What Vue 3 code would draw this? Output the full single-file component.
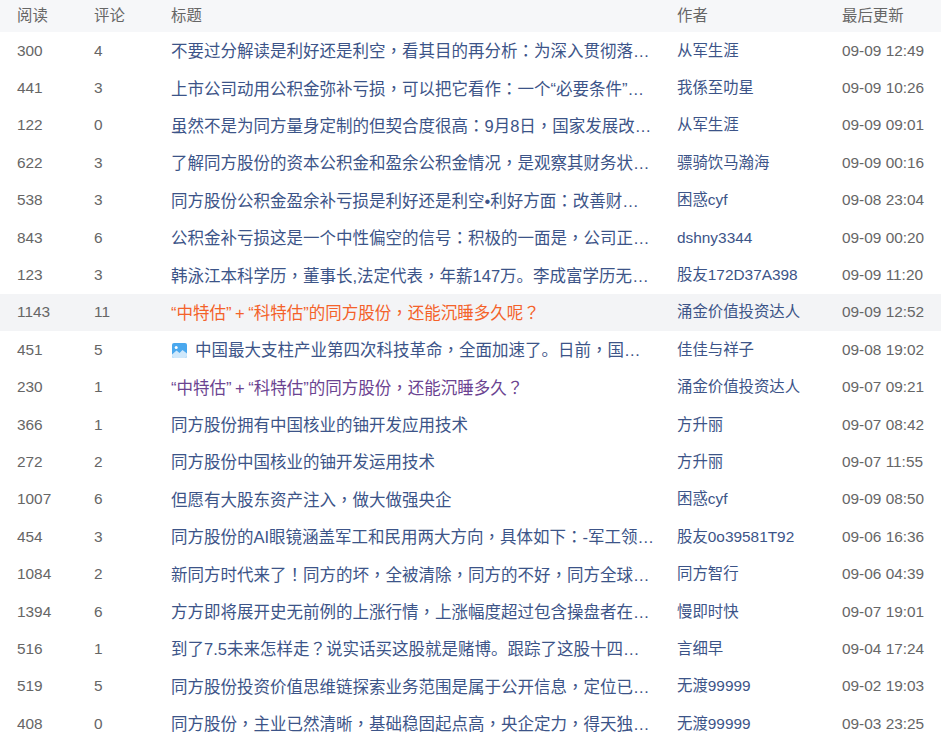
<script setup>
const rows = [
  ['300','4','不要过分解读是利好还是利空，看其目的再分析：为深入贯彻落实新国九条精神','从军生涯','09-09 12:49'],
  ['441','3','上市公司动用公积金弥补亏损，可以把它看作：一个“必要条件”，而非充分条件','我係至叻星','09-09 10:26'],
  ['122','0','虽然不是为同方量身定制的但契合度很高：9月8日，国家发展改革委等部门','从军生涯','09-09 09:01'],
  ['622','3','了解同方股份的资本公积金和盈余公积金情况，是观察其财务状况的重要窗口','骠骑饮马瀚海','09-09 00:16'],
  ['538','3','同方股份公积金盈余补亏损是利好还是利空•利好方面：改善财务状况提升信心','困惑cyf','09-08 23:04'],
  ['843','6','公积金补亏损这是一个中性偏空的信号：积极的一面是，公司正在努力修复报表','dshny3344','09-09 00:20'],
  ['123','3','韩泳江本科学历，董事长,法定代表，年薪147万。李成富学历无从知晓，总裁','股友172D37A398','09-09 11:20'],
  ['1143','11','“中特估” + “科特估”的同方股份，还能沉睡多久呢？','涌金价值投资达人','09-09 12:52','hot'],
  ['451','5','中国最大支柱产业第四次科技革命，全面加速了。日前，国务院印发通知','佳佳与祥子','09-08 19:02','img'],
  ['230','1','“中特估” + “科特估”的同方股份，还能沉睡多久？','涌金价值投资达人','09-07 09:21','visited'],
  ['366','1','同方股份拥有中国核业的铀开发应用技术','方升丽','09-07 08:42'],
  ['272','2','同方股份中国核业的铀开发运用技术','方升丽','09-07 11:55'],
  ['1007','6','但愿有大股东资产注入，做大做强央企','困惑cyf','09-09 08:50'],
  ['454','3','同方股份的AI眼镜涵盖军工和民用两大方向，具体如下：-军工领域应用广泛','股友0o39581T92','09-06 16:36'],
  ['1084','2','新同方时代来了！同方的坏，全被清除，同方的不好，同方全球化布局开始了','同方智行','09-06 04:39'],
  ['1394','6','方方即将展开史无前例的上涨行情，上涨幅度超过包含操盘者在内所有人预期','慢即时快','09-07 19:01'],
  ['516','1','到了7.5未来怎样走？说实话买这股就是赌博。跟踪了这股十四个月了，感觉','言细早','09-04 17:24'],
  ['519','5','同方股份投资价值思维链探索业务范围是属于公开信息，定位已经明确的公司','无渡99999','09-02 19:03'],
  ['408','0','同方股份，主业已然清晰，基础稳固起点高，央企定力，得天独厚的优势尽显','无渡99999','09-03 23:25'],
]
const parts = (s) => s.split(/([，：！？])/).filter(Boolean)
const isPunct = (p) => /^[，：！？]$/.test(p)
</script>

<template>
  <div class="list">
    <div class="row head">
      <span>阅读</span><span>评论</span><span>标题</span><span>作者</span><span>最后更新</span>
    </div>
    <div v-for="r in rows" :key="r[0] + r[4]" class="row" :class="{ active: r[5] === 'hot' }">
      <span>{{ r[0] }}</span>
      <span>{{ r[1] }}</span>
      <span class="title" :class="r[5]"><svg v-if="r[5] === 'img'" class="pic" width="15" height="15" viewBox="0 0 15 15">
          <rect width="15" height="15" rx="2" fill="#4aa8ee" />
          <path d="M0 11.5 L4.5 7.5 L7.5 10 L10.5 7 L15 10.5 V13 a2 2 0 0 1-2 2 H2 a2 2 0 0 1-2-2Z" fill="#cfe8fb" />
          <circle cx="4.2" cy="4.4" r="1.5" fill="#fff" />
        </svg><template v-for="(p, i) in parts(r[2])" :key="i"><span v-if="isPunct(p)" class="punct">{{ p }}</span><template v-else>{{ p }}</template></template></span>
      <span class="author">{{ r[3] }}</span>
      <span>{{ r[4] }}</span>
    </div>
  </div>
</template>

<style scoped>
.list {
  width: 941px;
  font-family: "Liberation Sans", "Noto Sans CJK SC", sans-serif;
  font-size: 15.4px;
  color: #666;
}
.row {
  display: grid;
  grid-template-columns: 77px 77px 506px 165px 99px;
  align-items: center;
  height: 37.4px;
  padding-left: 17px;
  box-sizing: border-box;
  line-height: 22px;
}
.head {
  height: 32px;
  background: #f6f7f9;
}
.active {
  background: #f3f4f6;
}
.title {
  font-size: 16.5px;
  color: #3c5488;
  width: 484px;
  white-space: nowrap;
  overflow: hidden;
  text-overflow: ellipsis;
}
.punct {
  font-family: "Noto Sans CJK TC", sans-serif;
}
.author {
  color: #3c5488;
}
.hot {
  color: #f4622a;
  word-spacing: -1px;
}
.visited {
  color: #6b4391;
  word-spacing: -1px;
}
.pic {
  vertical-align: -2px;
  margin-left: 1px;
  margin-right: 8px;
}
</style>
